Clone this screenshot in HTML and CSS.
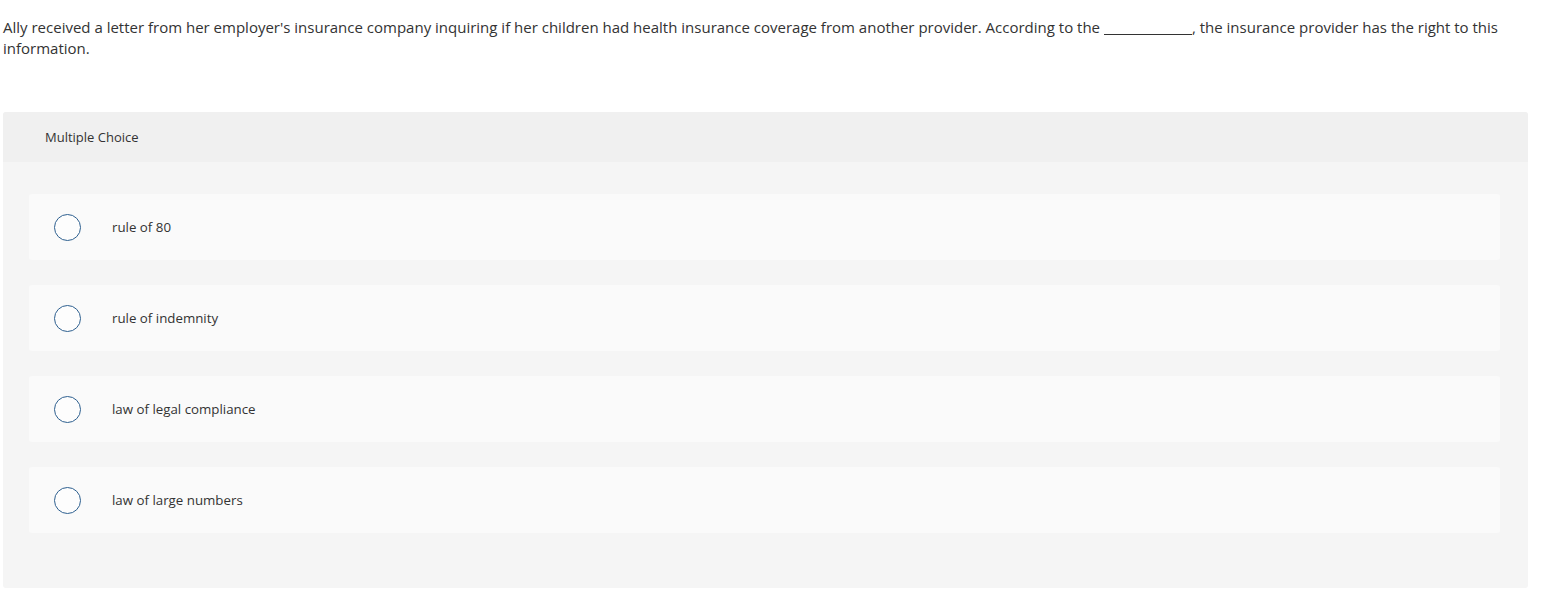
FILE: index.html
```html
<!DOCTYPE html>
<html>
<head>
<meta charset="utf-8">
<link rel="stylesheet" href="styles.css">
</head>
<body>
<div class="question">Ally received a letter from her employer's insurance company inquiring if her children had health insurance coverage from another provider. According to the <span class="blank"></span>, the insurance provider has the right to this information.</div>
<div class="panel">
  <div class="panel-head">Multiple Choice</div>
  <div class="panel-body">
    <div class="option"><span class="radio"></span><span class="label">rule of 80</span></div>
    <div class="option"><span class="radio"></span><span class="label">rule of indemnity</span></div>
    <div class="option"><span class="radio"></span><span class="label">law of legal compliance</span></div>
    <div class="option"><span class="radio"></span><span class="label">law of large numbers</span></div>
  </div>
</div>
</body>
</html>
```
FILE: styles.css
```css
html, body {
  margin: 0;
  padding: 0;
  background: #fff;
}
body {
  font-family: "Open Sans", Lato, sans-serif;
  color: #333;
}
.question {
  padding: 17px 50px 0 3px;
  font-size: 15px;
  line-height: 21px;
}
.blank {
  display: inline-block;
  width: 88px;
  height: 14px;
  border-bottom: 1px solid #333;
  vertical-align: -2px;
}
.panel {
  margin: 53px 0 0 3px;
  width: 1525px;
  background: #f5f5f5;
  border-radius: 3px;
  overflow: hidden;
}
.panel-head {
  height: 50px;
  background: #f0f0f0;
  display: flex;
  align-items: center;
  padding-left: 42px;
  font-size: 13px;
  color: #333;
}
.panel-body {
  padding: 32px 28px 55px 26px;
  display: flex;
  flex-direction: column;
  gap: 25px;
}
.option {
  height: 66px;
  background: #fafafa;
  border-radius: 3px;
  display: flex;
  align-items: center;
  padding-left: 25px;
}
.radio {
  width: 25px;
  height: 25px;
  border: 1.5px solid #2d5f8f;
  border-radius: 50%;
  background: #fdfdfd;
  flex: none;
}
.label {
  margin-left: 31px;
  font-size: 13.3px;
  color: #333;
}
```
